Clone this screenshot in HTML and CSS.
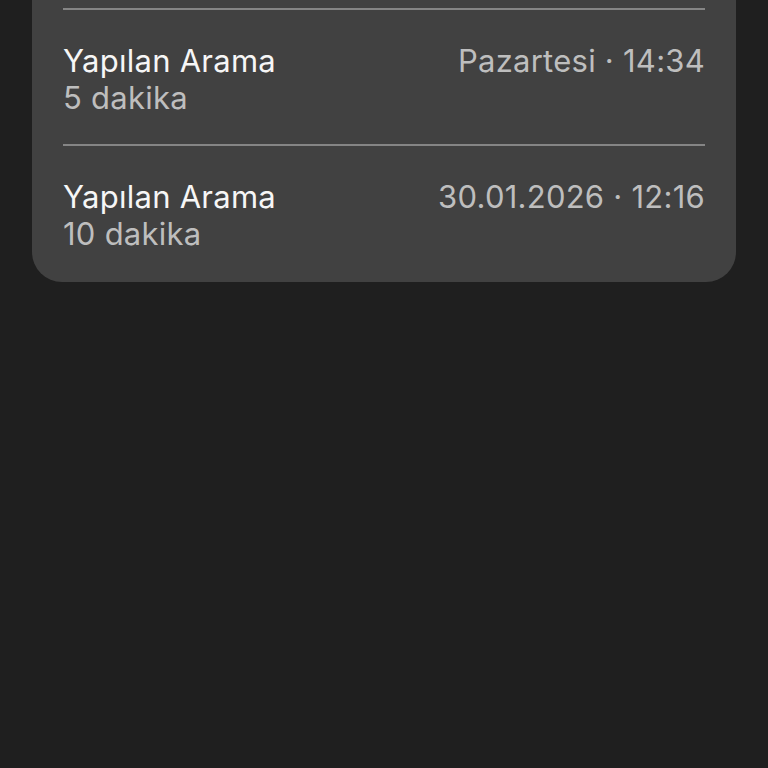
FILE: index.html
```html
<!DOCTYPE html>
<html lang="tr">

<head>
    <meta charset="UTF-8">
    <meta name="viewport" content="width=device-width, initial-scale=1.0">
    <title>Arama Geçmişi</title>
    <link rel="stylesheet" href="styles.css">
</head>

<body>
    <!-- ARAMA LISTESI -->
    <section class="Calls">
        <div class="Calls-item">
            <div class="Calls-info">
                <p class="Calls-type">Yapılan Arama</p>
                <p class="Calls-duration">5 dakika</p>
            </div>
            <p class="Calls-date">Pazartesi · 14:34</p>
        </div>

        <div class="Calls-item">
            <div class="Calls-info">
                <p class="Calls-type">Yapılan Arama</p>
                <p class="Calls-duration">10 dakika</p>
            </div>
            <p class="Calls-date">30.01.2026 · 12:16</p>
        </div>
    </section>
</body>

</html>
```

FILE: styles.css
```css
/* VARIABLES */
:root {
    --color-background: #1f1f1f;
    --color-card: #414141;
    --color-text: #f6f6f6;
    --color-text-soft: #bebebe;
    --color-divider: #858585;
}

/* RESET */
* {
    margin: 0;
    padding: 0;
    box-sizing: border-box;
}

body {
    background-color: var(--color-background);
    color: var(--color-text);
    font-family: Inter, Roboto, sans-serif;
    min-height: 100vh;
}

/* CARD */
.Calls {
    margin: 0 32px;
    padding: 8px 31px 0;
    background-color: var(--color-card);
    border-radius: 0 0 30px 30px;
}

.Calls-item {
    display: flex;
    justify-content: space-between;
    align-items: flex-start;
    border-top: 2px solid var(--color-divider);
    padding: 32px 0 28px;
}

.Calls-item:last-child {
    padding-bottom: 30px;
}

.Calls-type,
.Calls-duration,
.Calls-date {
    font-size: 31px;
    line-height: 37px;
    letter-spacing: 0.25px;
}

.Calls-duration,
.Calls-date {
    color: var(--color-text-soft);
}
```
